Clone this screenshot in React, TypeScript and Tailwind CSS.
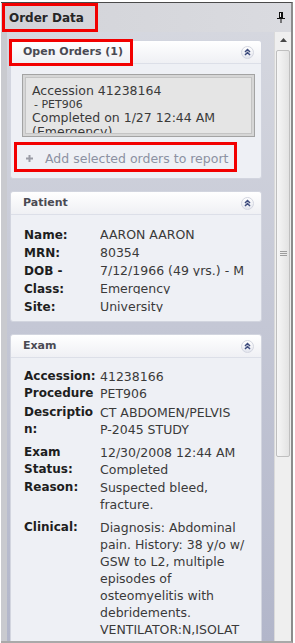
import type { ReactNode } from "react"

type FieldProps = {
  label: string[]
  value: string[]
  clip?: boolean
  className?: string
}

function CollapseButton() {
  return (
    <span className="flex h-[13px] w-[13px] items-center justify-center rounded-full border border-[#d3d6e0] bg-linear-to-b from-white to-[#e4e6ee]">
      <svg width="7" height="8" viewBox="0 0 7 8">
        <path d="M1 4 L3.5 1.5 L6 4 M1 7 L3.5 4.5 L6 7" fill="none" stroke="#3e4c7e" strokeWidth="1.5" />
      </svg>
    </span>
  )
}

function Card({ title, children }: { title: string; children: ReactNode }) {
  return (
    <section className="shrink-0 rounded-[3px] border border-[#d2d5df] bg-[#eef0f5]">
      <header className="flex h-[23px] items-center justify-between rounded-t-[3px] border-b border-[#dcdfe8] bg-linear-to-b from-white to-[#eff0f4] pr-[7px] pl-[12px]">
        <span className="text-[11px] font-bold text-[#4a4a53]">{title}</span>
        <CollapseButton />
      </header>
      {children}
    </section>
  )
}

function Field({ label, value, clip, className = "" }: FieldProps) {
  return (
    <div className={`grid grid-cols-[76px_1fr] ${className}`}>
      <div className="text-[12px] font-bold text-[#1e1e1e]">
        {label.map((line) => (
          <div key={line}>{line}</div>
        ))}
      </div>
      <div className="text-[12.5px] whitespace-nowrap text-[#3a3a3a]">
        {value.map((line) =>
          clip ? (
            <div key={line} className="h-[14px] overflow-hidden">
              {line}
            </div>
          ) : (
            <div key={line}>{line}</div>
          ),
        )}
      </div>
    </div>
  )
}

const patientFields = [
  { label: ["Name:"], value: ["AARON AARON"] },
  { label: ["MRN:"], value: ["80354"] },
  { label: ["DOB -"], value: ["7/12/1966 (49 yrs.) - M"] },
  { label: ["Class:"], value: ["Emergency"] },
  { label: ["Site:"], value: ["University"] },
]

const clinical = [
  "Diagnosis: Abdominal",
  "pain. History: 38 y/o w/",
  "GSW to L2, multiple",
  "episodes of",
  "osteomyelitis with",
  "debridements.",
  "VENTILATOR:N,ISOLAT",
  "ION:N,SEDATION:N,",
]

export default function App() {
  return (
    <div className="relative h-[643px] w-[295px] overflow-hidden bg-white font-['DejaVu_Sans',sans-serif]">
      <div className="mt-[2px] mr-[2px] ml-px flex h-[641px] flex-col border-t border-r-2 border-b-2 border-t-[#4a4a4a] border-r-[#8c8c8c] border-b-[#a9a9a9] bg-[#cfd0d5]">
        <div className="flex h-[29px] shrink-0 items-center justify-between bg-linear-to-r from-[#d2d3d8] to-[#dadbe0] pr-[6px] pl-[8px]">
          <span className="text-[12px] font-bold text-[#262626]">Order Data</span>
          <svg width="8" height="11" viewBox="0 0 8 11">
            <rect x="2" y="0" width="4" height="6" fill="#111" />
            <rect x="3" y="1" width="1" height="4" fill="#f0f0f0" />
            <rect x="0" y="6" width="8" height="1" fill="#111" />
            <rect x="3.5" y="7" width="1" height="4" fill="#111" />
          </svg>
        </div>

        <div className="flex min-h-0 flex-1">
          <div className="flex min-w-0 flex-1 flex-col gap-[12px] overflow-hidden border-l-[6px] border-l-[#c9cacf] bg-linear-to-b from-[#d5d7df] to-[#b2b6ca] pt-[8px] pr-[12px] pl-[3px]">
            <Card title="Open Orders (1)">
              <div className="mt-[10px] mr-[6px] ml-[11px] h-[63px] border border-[#a3a3a3] bg-[#d6d6d6] p-[2px]">
                <div className="h-full overflow-hidden border border-[#c4c4c4] bg-[#e5e5e5] pt-[6px] pl-[6px] text-[12.5px] leading-[13.5px] whitespace-nowrap text-[#3a3a3a]">
                  <div>Accession 41238164</div>
                  <div className="pl-[2px] text-[11px]">- PET906</div>
                  <div>Completed on 1/27 12:44 AM</div>
                  <div>(Emergency)</div>
                </div>
              </div>
              <div className="mt-[13px] flex items-center gap-[12px] pb-[11px] pl-[15px] text-[12.5px] leading-[17px] text-[#8c91a2]">
                <svg width="7" height="7" viewBox="0 0 7 7">
                  <path d="M3.5 0 V7 M0 3.5 H7" stroke="#9a9ca6" strokeWidth="2" />
                </svg>
                <span>Add selected orders to report</span>
              </div>
            </Card>

            <Card title="Patient">
              <div className="pt-[11px] pb-[5px] pl-[13px] leading-[18px]">
                {patientFields.map((field) => (
                  <Field key={field.label[0]} label={field.label} value={field.value} clip />
                ))}
              </div>
            </Card>

            <Card title="Exam">
              <div className="pt-[10px] pb-[8px] pl-[13px] leading-[17px]">
                <Field label={["Accession:"]} value={["41238166"]} />
                <Field label={["Procedure"]} value={["PET906"]} />
                <Field className="mt-[2px]" label={["Descriptio", "n:"]} value={["CT ABDOMEN/PELVIS", "P-2045 STUDY"]} />
                <Field className="mt-[6px]" label={["Exam"]} value={["12/30/2008 12:44 AM"]} />
                <Field label={["Status:"]} value={["Completed"]} clip />
                <Field className="mt-px" label={["Reason:"]} value={["Suspected bleed,", "fracture."]} />
                <Field className="mt-[6px]" label={["Clinical:"]} value={clinical} />
              </div>
            </Card>
          </div>

          <div className="flex w-[17px] shrink-0 flex-col border-l border-[#dadada] bg-[#efefef]">
            <div className="flex h-[16px] items-center justify-center">
              <svg width="7" height="4" viewBox="0 0 7 4">
                <path d="M0 4 L3.5 0 L7 4 Z" fill="#474747" />
              </svg>
            </div>
            <div className="mt-[2px] mr-px ml-[1px] flex h-[407px] flex-col items-center justify-center gap-[1px] rounded-[2px] border border-[#bfbfbf] bg-linear-to-r from-[#f6f6f6] to-[#e3e3e3]">
              <span className="h-px w-[7px] bg-[#9d9d9d]" />
              <span className="h-px w-[7px] bg-[#9d9d9d]" />
              <span className="h-px w-[7px] bg-[#9d9d9d]" />
            </div>
          </div>
        </div>
      </div>

      <div className="absolute top-[3px] left-[2px] h-[29px] w-[96px] border-[3px] border-[#f20000]" />
      <div className="absolute top-[39px] left-[9px] h-[27px] w-[124px] border-[3px] border-[#f20000]" />
      <div className="absolute top-[142px] left-[14px] h-[30px] w-[223px] border-[3px] border-[#f20000]" />
    </div>
  )
}
